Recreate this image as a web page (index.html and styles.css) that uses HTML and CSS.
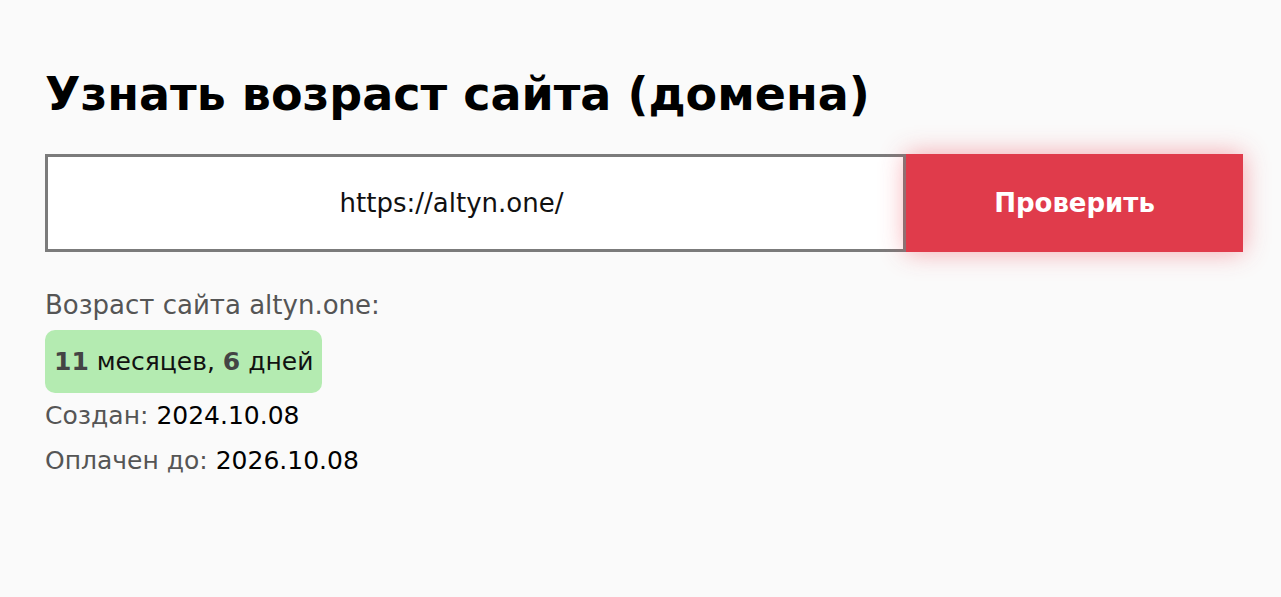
FILE: index.html
```html
<!DOCTYPE html>
<html lang="ru">
<head>
<meta charset="utf-8">
<link rel="stylesheet" href="styles.css">
</head>
<body>
<main class="page">
  <h1 class="title">Узнать возраст сайта (домена)</h1>
  <form class="check">
    <div class="field">https://altyn.one/</div>
    <button type="button" class="btn">Проверить</button>
  </form>
  <div class="result">
    <div class="line muted head">Возраст сайта altyn.one:</div>
    <div class="badge"><b>11</b> месяцев, <b>6</b> дней</div>
    <div class="line muted">Создан: <span class="val">2024.10.08</span></div>
    <div class="line muted">Оплачен до: <span class="val">2026.10.08</span></div>
  </div>
</main>
</body>
</html>
```

FILE: styles.css
```css
html, body { margin: 0; padding: 0; }
body {
  background: #fafafa;
  font-family: "DejaVu Sans", "Inter", sans-serif;
  color: #000;
}
.page {
  padding: 62px 38px 0 45px;
}
.title {
  margin: 0;
  font-size: 46px;
  font-weight: 700;
  line-height: 64px;
  color: #000;
}
.check {
  display: flex;
  margin-top: 28px;
  height: 98px;
}
.field {
  flex: 0 0 861px;
  box-sizing: border-box;
  border: 3px solid #7b7b7b;
  background: #fff;
  display: flex;
  align-items: center;
  justify-content: center;
  padding-right: 48px;
  font-size: 26px;
  font-weight: 400;
  color: #111;
}
.btn {
  flex: 0 0 337px;
  border: none;
  background: #e03b4b;
  color: #fff;
  font-family: inherit;
  font-size: 26px;
  font-weight: 700;
  box-shadow: 0 0 24px rgba(240, 60, 75, 0.45);
  cursor: pointer;
}
.result {
  margin-top: 36px;
  font-size: 25px;
}
.line {
  line-height: 34px;
}
.head { font-size: 26px; }
.muted { color: #555; }
.val { color: #000; }
.badge {
  display: inline-block;
  margin: 8px 0 6px;
  padding: 0 9px;
  height: 63px;
  line-height: 63px;
  background: #b4ebb1;
  border-radius: 10px;
  color: #111;
}
.badge b { color: #444; font-weight: 700; }
.result .line + .line { margin-top: 11px; }
```
